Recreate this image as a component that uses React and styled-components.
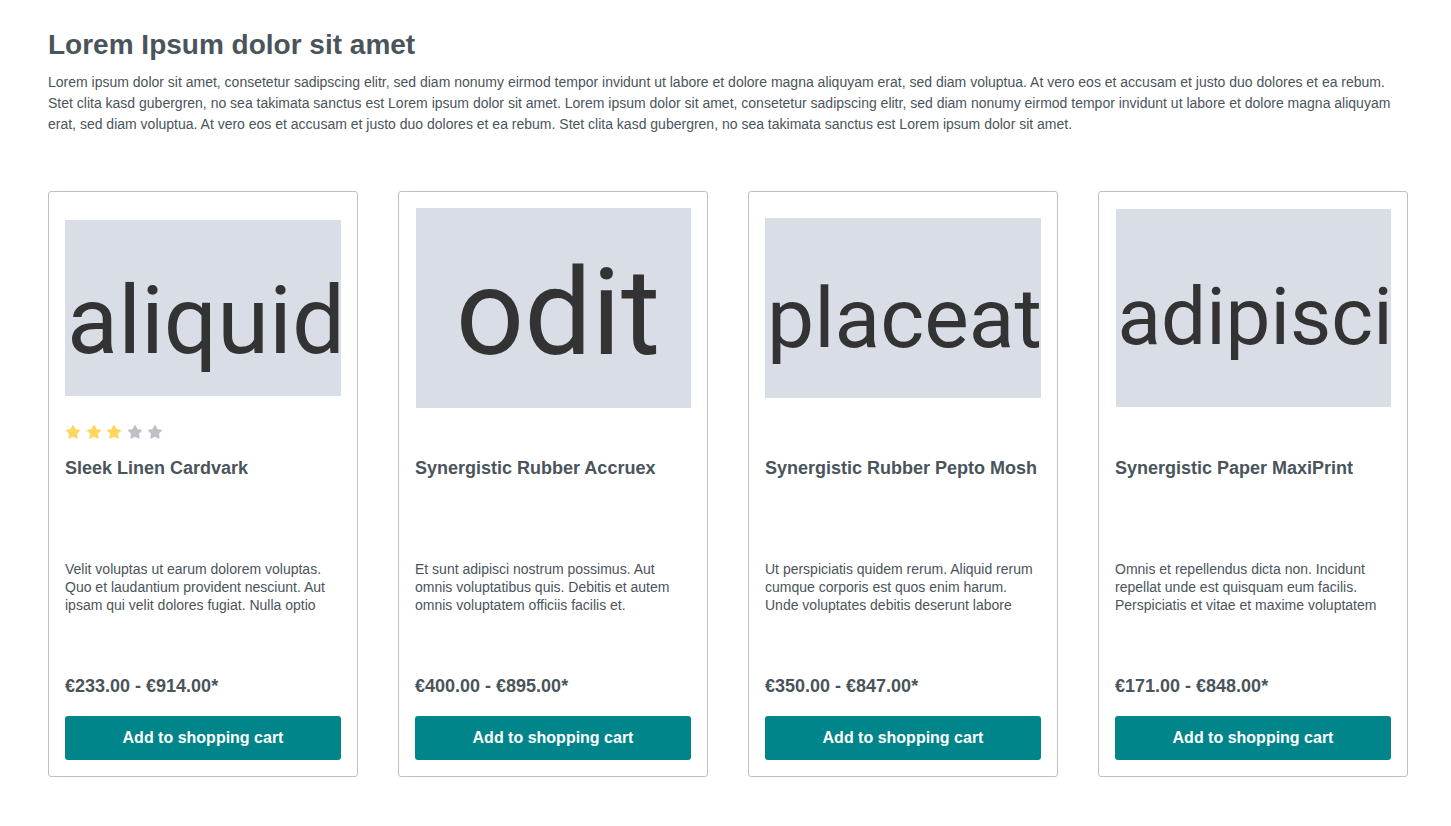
import React from "react";
import styled, { createGlobalStyle } from "styled-components";

const GlobalStyle = createGlobalStyle`
  body {
    margin: 0;
    background: #fff;
    font-family: "Liberation Sans", Arial, sans-serif;
    color: #4a545b;
  }
`;

const products = [
  {
    word: "aliquid",
    w: 276,
    h: 176,
    size: 94,
    top: 54,
    left: 2,
    center: false,
    rating: 3,
    name: "Sleek Linen Cardvark",
    text: "Velit voluptas ut earum dolorem voluptas. Quo et laudantium provident nesciunt. Aut ipsam qui velit dolores fugiat. Nulla optio",
    price: "€233.00 - €914.00*",
  },
  {
    word: "odit",
    w: 275,
    h: 200,
    size: 120,
    top: 45,
    left: 10,
    center: true,
    rating: 0,
    name: "Synergistic Rubber Accruex",
    text: "Et sunt adipisci nostrum possimus. Aut omnis voluptatibus quis. Debitis et autem omnis voluptatem officiis facilis et.",
    price: "€400.00 - €895.00*",
  },
  {
    word: "placeat",
    w: 276,
    h: 180,
    size: 84,
    top: 59,
    left: 2,
    center: false,
    rating: 0,
    name: "Synergistic Rubber Pepto Mosh",
    text: "Ut perspiciatis quidem rerum. Aliquid rerum cumque corporis est quos enim harum. Unde voluptates debitis deserunt labore",
    price: "€350.00 - €847.00*",
  },
  {
    word: "adipisci",
    w: 275,
    h: 198,
    size: 80,
    top: 68,
    left: 2,
    center: false,
    rating: 0,
    name: "Synergistic Paper MaxiPrint",
    text: "Omnis et repellendus dicta non. Incidunt repellat unde est quisquam eum facilis. Perspiciatis et vitae et maxime voluptatem",
    price: "€171.00 - €848.00*",
  },
];

const Star = ({ filled }) => (
  <StarIcon viewBox="0 0 24 24" $filled={filled}>
    <path
      d="M12 2.8l2.9 6 6.4.9-4.7 4.5 1.2 6.5L12 17.6l-5.8 3.1 1.2-6.5-4.7-4.5 6.4-.9z"
      strokeLinejoin="round"
      strokeWidth="2.4"
    />
  </StarIcon>
);

const ProductCard = ({ product }) => (
  <Card>
    <ImageArea>
      <Picture $w={product.w} $h={product.h}>
        <PictureWord
          $size={product.size}
          $top={product.top}
          $left={product.left}
          $center={product.center}
        >
          {product.word}
        </PictureWord>
      </Picture>
    </ImageArea>
    <Rating>
      {product.rating > 0 &&
        [1, 2, 3, 4, 5].map((n) => <Star key={n} filled={n <= product.rating} />)}
    </Rating>
    <Name>{product.name}</Name>
    <Description>{product.text}</Description>
    <Price>{product.price}</Price>
    <BuyButton type="button">Add to shopping cart</BuyButton>
  </Card>
);

const App = () => {
  return (
    <>
      <GlobalStyle />
      <Page>
        <Heading>Lorem Ipsum dolor sit amet</Heading>
        <Intro>
          Lorem ipsum dolor sit amet, consetetur sadipscing elitr, sed diam nonumy eirmod tempor invidunt ut labore et
          dolore magna aliquyam erat, sed diam voluptua. At vero eos et accusam et justo duo dolores et ea rebum. Stet
          clita kasd gubergren, no sea takimata sanctus est Lorem ipsum dolor sit amet. Lorem ipsum dolor sit amet,
          consetetur sadipscing elitr, sed diam nonumy eirmod tempor invidunt ut labore et dolore magna aliquyam erat,
          sed diam voluptua. At vero eos et accusam et justo duo dolores et ea rebum. Stet clita kasd gubergren, no sea
          takimata sanctus est Lorem ipsum dolor sit amet.
        </Intro>
        <Grid>
          {products.map((p) => (
            <ProductCard key={p.word} product={p} />
          ))}
        </Grid>
      </Page>
    </>
  );
};

const Page = styled.main`
  padding: 28px 43px 50px 48px;
`;

const Heading = styled.h1`
  margin: 0 0 10px;
  font-size: 28px;
  line-height: 34px;
  font-weight: 700;
  color: #4a545b;
`;

const Intro = styled.p`
  margin: 0;
  font-size: 14px;
  line-height: 21px;
  color: #4a545b;
`;

const Grid = styled.div`
  display: grid;
  grid-template-columns: repeat(4, 310px);
  gap: 40px;
  margin-top: 56px;
`;

const Card = styled.div`
  display: flex;
  flex-direction: column;
  box-sizing: border-box;
  border: 1px solid #bcc1c7;
  border-radius: 3px;
  padding: 16px;
`;

const ImageArea = styled.div`
  height: 200px;
  display: flex;
  align-items: center;
  justify-content: center;
`;

const Picture = styled.div`
  width: ${({ $w }) => $w}px;
  height: ${({ $h }) => $h}px;
  background: #d9dde6;
  overflow: hidden;
`;

const PictureWord = styled.div`
  padding-top: ${({ $top }) => $top}px;
  padding-left: ${({ $left }) => $left}px;
  text-align: ${({ $center }) => ($center ? "center" : "left")};
  font-family: Roboto, "Noto Sans", sans-serif;
  font-size: ${({ $size }) => $size}px;
  line-height: 1;
  color: #333;
  white-space: nowrap;
`;

const Rating = styled.div`
  display: flex;
  gap: 4.5px;
  height: 25px;
  margin-top: 16px;
`;

const StarIcon = styled.svg`
  width: 16px;
  height: 16px;
  fill: ${({ $filled }) => ($filled ? "#ffd65c" : "#bcc1c7")};
  stroke: ${({ $filled }) => ($filled ? "#ffd65c" : "#bcc1c7")};
`;

const Name = styled.div`
  margin-top: 8px;
  min-height: 44px;
  font-size: 18px;
  line-height: 22px;
  font-weight: 700;
  color: #4a545b;
`;

const Description = styled.p`
  margin: 59px 0 0;
  height: 115px;
  font-size: 14px;
  line-height: 18px;
  color: #4a545b;
`;

const Price = styled.div`
  font-size: 18px;
  line-height: 22px;
  font-weight: 700;
  color: #4a545b;
`;

const BuyButton = styled.button`
  margin-top: 19px;
  height: 44px;
  border: none;
  border-radius: 3px;
  background: #00858a;
  color: #fff;
  font-family: "Liberation Sans", Arial, sans-serif;
  font-size: 16px;
  font-weight: 700;
  cursor: pointer;
`;

export default App;
